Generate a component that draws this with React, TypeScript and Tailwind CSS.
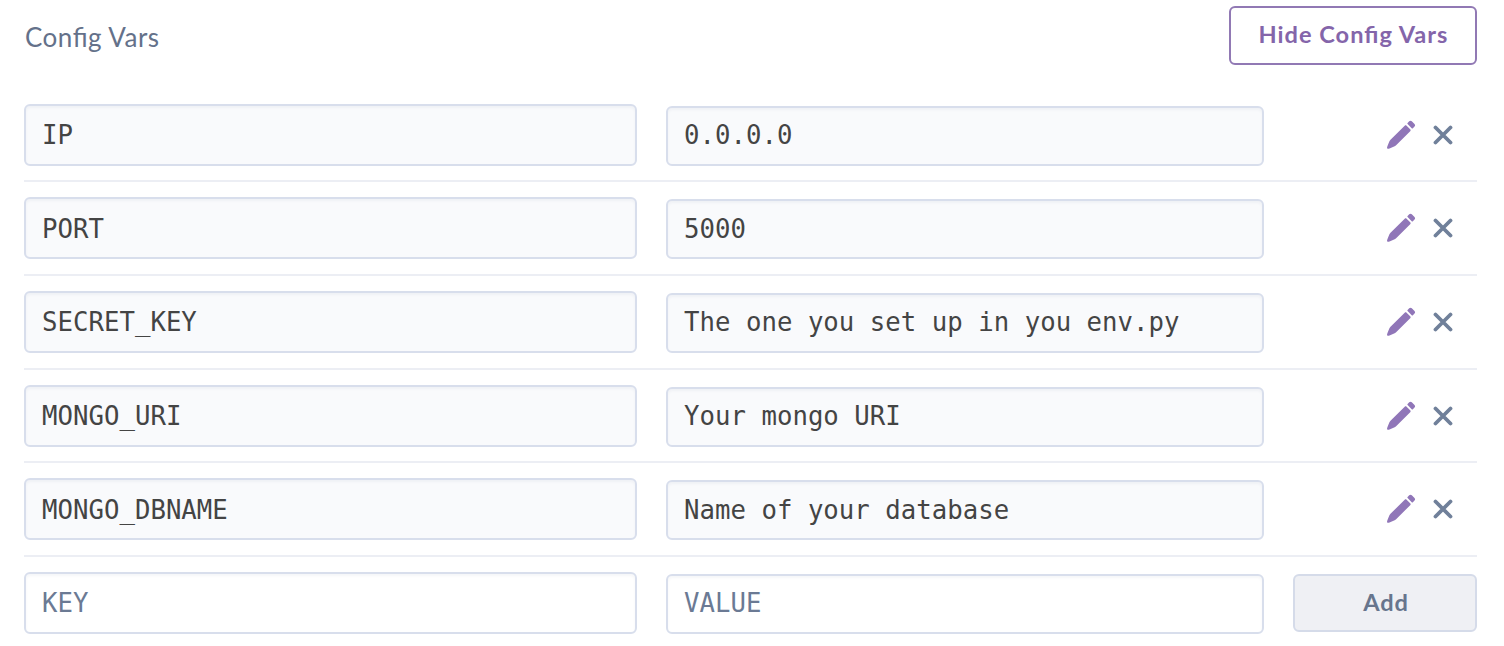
import React from "react";

type ConfigVar = { name: string; value: string };

const vars: ConfigVar[] = [
  { name: "IP", value: "0.0.0.0" },
  { name: "PORT", value: "5000" },
  { name: "SECRET_KEY", value: "The one you set up in you env.py" },
  { name: "MONGO_URI", value: "Your mongo URI" },
  { name: "MONGO_DBNAME", value: "Name of your database" },
];

const field =
  "block min-w-0 rounded-[6px] border-2 border-[#d8deec] px-[16px] font-['DejaVu_Sans_Mono',monospace] text-[25.7px] tracking-[0.02px] text-[#444444] shadow-[inset_0_2px_3px_rgba(60,75,120,0.05)] outline-none placeholder:text-[#6b7a94] placeholder:opacity-100";

function PencilIcon() {
  return (
    <svg width="30" height="30" viewBox="0 0 30 30" fill="#9076b8" aria-hidden="true">
      <path d="M1.4 28.6C.8 28.4 1 27.6 1.4 26.3L3.2 21.7C3.5 21 3.9 20.4 4.5 19.8L18.7 5.7C19.3 5.1 20 5.1 20.6 5.7L24.2 9.3C24.8 9.9 24.8 10.6 24.2 11.2L10.1 25.2C9.5 25.8 8.8 26.3 8.1 26.6L3.5 28.4C2.6 28.8 1.9 28.9 1.4 28.6Z" />
      <path d="M21.6 2.9L23.2 1.3C24 .5 25 .5 25.8 1.3L28.5 4C29.3 4.8 29.3 5.8 28.5 6.6L26.9 8.2C26.5 8.6 26.1 8.6 25.7 8.2L21.6 4.1C21.2 3.7 21.2 3.3 21.6 2.9Z" />
    </svg>
  );
}

function CloseIcon() {
  return (
    <svg width="20" height="20" viewBox="0 0 20 20" fill="none" stroke="#70809a" strokeWidth="3.8" strokeLinecap="round" aria-hidden="true">
      <path d="M2.5 2.5L17.5 17.5M17.5 2.5L2.5 17.5" />
    </svg>
  );
}

export default function App() {
  return (
    <main className="h-[646px] overflow-hidden bg-white pl-[24px] pr-[27px] pt-[6px] font-[Lato,sans-serif]">
      <header className="flex h-[82.5px] items-start justify-between">
        <h1 className="ml-[1px] mt-[12px] text-[26px] leading-[38px] tracking-[0.5px] text-[#64718a] [font-feature-settings:'liga'_1]">
          Config Vars
        </h1>
        <button className="h-[59px] w-[248px] rounded-[6px] border-2 border-[#9179b4] pb-[1px] pl-[1px] text-[23.6px] font-bold tracking-[1px] text-[#8465aa] [font-feature-settings:'liga'_1]">
          Hide Config Vars
        </button>
      </header>
      {vars.map((item) => (
        <div key={item.name} className="flex h-[93.7px] items-start border-b-2 border-[#eceef4] pt-[15px]">
          <input readOnly aria-label="Key" value={item.name} className={`${field} h-[62px] w-[613px] bg-[#f9fafc] pt-[1px]`} />
          <input readOnly aria-label="Value" value={item.value} className={`${field} ml-[29px] mt-[2px] h-[60px] w-[598px] bg-[#f9fafc] pb-[1px]`} />
          <div className="mt-[16px] flex h-[30px] flex-1 items-center justify-end gap-[16.5px] pr-[24.5px]">
            <button aria-label="Edit"><PencilIcon /></button>
            <button aria-label="Remove"><CloseIcon /></button>
          </div>
        </div>
      ))}
      <div className="flex items-start pt-[15px]">
        <input aria-label="New key" placeholder="KEY" className={`${field} h-[62px] w-[613px] bg-white pt-[1px]`} />
        <input aria-label="New value" placeholder="VALUE" className={`${field} ml-[29px] mt-[2px] h-[60px] w-[598px] bg-white pb-[1px]`} />
        <button className="ml-[29px] mt-[2px] h-[58px] w-[184px] rounded-[6px] border-2 border-[#d5dbe9] bg-[#eff0f4] pl-[2px] text-[23.6px] font-bold tracking-[0.8px] text-[#67758d]">
          Add
        </button>
      </div>
    </main>
  );
}
